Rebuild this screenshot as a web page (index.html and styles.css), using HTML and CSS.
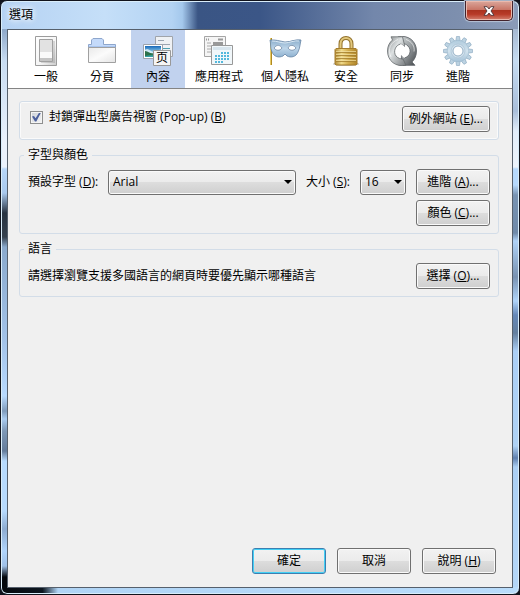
FILE: index.html
```html
<!DOCTYPE html>
<html lang="zh-Hant">
<head>
<meta charset="utf-8">
<title>選項</title>
<link rel="stylesheet" href="styles.css">
</head>
<body>
<div class="window">
  <header class="titlebar">
    <h1 class="title">選項</h1>
    <button class="close" type="button" aria-label="關閉">
      <svg width="12" height="10" viewBox="0 0 12 10"><path d="M1 .7h3.2L6 3l1.8-2.3H11L8 5l3 4.3H7.8L6 7 4.2 9.3H1L4 5z" fill="#fff" stroke="#4c3439" stroke-width=".9"/></svg>
    </button>
  </header>
  <main class="client">
    <nav class="tabs">
      <button class="tab" type="button">
        <svg class="icon" viewBox="0 0 30 30">
          <defs><linearGradient id="sw" x1="0" y1="0" x2="1" y2="1"><stop offset="0" stop-color="#fff"/><stop offset=".6" stop-color="#f4f4f4"/><stop offset="1" stop-color="#cacaca"/></linearGradient></defs>
          <path d="M4.500 .5h21v29h-21z" fill="url(#sw)" stroke="#9c9c9c"/>
          <path d="M10 5h14v22H10z" fill="#000" opacity=".13"/>
          <path d="M8.500 3.500h13v22h-13z" fill="#e2e2e2" stroke="#a0a0a0"/>
          <path d="M9 16h12v6H9z" fill="#fafafa"/><path d="M9 22h12v3H9z" fill="#c5c5c5"/>
        </svg>
        <span>一般</span>
      </button>
      <button class="tab" type="button">
        <svg class="icon" viewBox="0 0 30 30">
          <defs><linearGradient id="fo" x1="0" y1="0" x2="1" y2="1"><stop offset="0" stop-color="#e9e9e9"/><stop offset=".5" stop-color="#fbfbfb"/><stop offset="1" stop-color="#e4e4e4"/></linearGradient></defs>
          <path d="M1.500 12V8.500h3V4l1.500-1.500h9L16.500 4v4.500h12V12z" fill="#c4dafa" stroke="#8ea6cc"/>
          <path d="M1.500 11.500h27v15h-27z" fill="url(#fo)" stroke="#a0a0a0"/>
          <path d="M2 10.500h26" stroke="#a9c5ef"/>
        </svg>
        <span>分頁</span>
      </button>
      <button class="tab selected" type="button" aria-current="page">
        <svg class="icon" viewBox="0 0 30 30">
          <defs><linearGradient id="sky" x1="0" y1="0" x2="0" y2="1"><stop offset="0" stop-color="#1768b9"/><stop offset=".6" stop-color="#9bd7ee"/><stop offset=".7" stop-color="#327b52"/><stop offset="1" stop-color="#34a6b5"/></linearGradient></defs>
          <path d="M12.500 .5h17v20h-17z" fill="#eff1f4" stroke="#a0a4aa"/>
          <path d="M15 4.500h6M18 8.500h9" stroke="#9ba4b0"/><path d="M15 12.500h12" stroke="#4d9faf"/>
          <path d="M.5 8.500h19v14H.5z" fill="#fff" stroke="#9da3ac"/>
          <path d="M2 10h16v11H2z" fill="url(#sky)"/>
          <path d="M2 14c3-3 5 1 8 2s5-3 8-2v3c-5 1-10 1-16-1z" fill="#e8f6fa" opacity=".75"/>
          <path d="M2 15c3 0 5 3 10 3l-10 2z" fill="#2c714a"/>
          <path d="M10.500 14.500h17v15h-17z" fill="#f5f5f5" stroke="#999"/>
          <text class="glyph" x="13" y="26">页</text>
        </svg>
        <span>內容</span>
      </button>
      <button class="tab" type="button">
        <svg class="icon" viewBox="0 0 30 30">
          <path d="M.5 .5h21v20H.5z" fill="#f5f5f5" stroke="#a5a5a5"/>
          <path d="M2 3.500h1m1 0h1m9 0h5" stroke="#9a9a9a" stroke-width="2"/>
          <path d="M3 7h4M3 10h4M3 13h4M3 16h4" stroke="#aaa"/><path d="M9 6h10v4H9z" fill="#999"/>
          <path d="M7.500 9.500h21v19h-21z" fill="#f1f7fa" stroke="#989898"/>
          <path d="M9 11h18v3H9z" fill="#d8e5ed"/>
          <path d="M17 17h9M11 20h15M11 23h15M11 26h9" stroke="#53b8dc" stroke-width="2" stroke-dasharray="2 1"/>
        </svg>
        <span>應用程式</span>
      </button>
      <button class="tab" type="button">
        <svg class="icon wide" viewBox="0 0 34 30">
          <defs><linearGradient id="ma" x1="0" y1="0" x2="0" y2="1"><stop offset="0" stop-color="#8aacca"/><stop offset=".5" stop-color="#bdd5e9"/><stop offset="1" stop-color="#8fb2d0"/></linearGradient></defs>
          <path d="M3 2v27" stroke="#b08a22" stroke-width="2"/><path d="M2.500 2v27" stroke="#e8cb66"/>
          <path d="M2 4c5-.5 10 1 15 2 6 0 10-3 16-2-1 4-1 8-3 12-2 5-7 6-11 4l-2-2-2 2c-4 2-9 1-11-4C2 12 3 8 2 4z" fill="url(#ma)" stroke="#6684a5" stroke-width=".8"/>
          <path d="M6 12c3-4 6-3 8 0-2 3-6 3-8 0zm14 0c2-4 6-3 8 0-2 3-6 3-8 0z" fill="#fff" stroke="#7189a5" stroke-width=".8"/>
          <path d="M4 5c5 0 9 2 13 2s10-3 14-2" fill="none" stroke="#d9e8f4"/>
        </svg>
        <span>個人隱私</span>
      </button>
      <button class="tab" type="button">
        <svg class="icon" viewBox="0 0 30 30">
          <defs><linearGradient id="lo" x1="0" y1="0" x2="1" y2="0"><stop offset="0" stop-color="#b18b36"/><stop offset=".3" stop-color="#f0da8b"/><stop offset=".6" stop-color="#d3ad4d"/><stop offset="1" stop-color="#af8429"/></linearGradient></defs>
          <ellipse cx="15" cy="28" rx="13" ry="2" fill="#777" opacity=".45"/>
          <path d="M9.500 13V8c0-8 11-8 11 0v5" fill="none" stroke="#92712a" stroke-width="4"/>
          <path d="M9.500 13V8c0-8 11-8 11 0v5" fill="none" stroke="#e2c87d" stroke-width="2"/>
          <path d="M5 12.500h20l1 1V28l-1 1H5l-1-1V13.500z" fill="url(#lo)" stroke="#a57d2b"/>
          <path d="M5 16.500h20M5 19.500h20M5 22.500h20M5 25.500h20" stroke="#a47f2e" opacity=".8"/>
          <path d="M5 15.500h20M5 18.500h20M5 21.500h20M5 24.500h20" stroke="#f4e2a3" opacity=".7"/>
        </svg>
        <span>安全</span>
      </button>
      <button class="tab" type="button">
        <svg class="icon" viewBox="0 0 30 30">
          <defs><linearGradient id="s1" x1="0" y1="0" x2="1" y2="1"><stop offset="0" stop-color="#85898b"/><stop offset=".4" stop-color="#dde1e2"/><stop offset="1" stop-color="#777b7e"/></linearGradient><linearGradient id="s2" x1="0" y1="0" x2="1" y2="1"><stop offset="0" stop-color="#d8dddd"/><stop offset=".5" stop-color="#989da0"/><stop offset="1" stop-color="#43474a"/></linearGradient></defs>
          <path d="M11 .8C21-1.500 29.500 5 29.500 15c0 5-2 8.500-4.500 11l3 3.300H15.500L14 19l3 3c6-1 8-8 4-12-2-2-4-2.500-6-2.500z" fill="url(#s2)" stroke="#5b6064" stroke-width=".8"/>
          <path d="M19 29.200C9 31.500.5 25 .5 15 .5 10 2.500 6.500 5.500 4L4 .8h11.500L18 11l-4-3c-6 1-8 8-5 12 2 2.500 5 3 7 3z" fill="url(#s1)" stroke="#65696c" stroke-width=".8"/>
          <path d="M4 21C0 13 4 6 11 3.500M19 3.500c6 2 9 7 8 12" fill="none" stroke="#fff" opacity=".6"/>
          <path d="m10 11 4-3 4 3 .5-2.500 3 4.500v5l-4.500 4-3-3-.5 3-3.500-4z" fill="#fff"/>
        </svg>
        <span>同步</span>
      </button>
      <button class="tab" type="button">
        <svg class="icon" viewBox="0 0 30 30">
          <defs><linearGradient id="ge" x1="0" y1="0" x2="0" y2="1"><stop offset="0" stop-color="#b0cbdd"/><stop offset=".5" stop-color="#d2e3ee"/><stop offset="1" stop-color="#a6c3d8"/></linearGradient></defs>
          <g fill="#bdd3e2" stroke="#86a5bd" stroke-width=".6">
            <path id="tooth" d="M12.800 5 13.500.5h3l.7 4.500z"/>
            <use href="#tooth" transform="rotate(30 15 15)"/><use href="#tooth" transform="rotate(60 15 15)"/><use href="#tooth" transform="rotate(90 15 15)"/><use href="#tooth" transform="rotate(120 15 15)"/><use href="#tooth" transform="rotate(150 15 15)"/><use href="#tooth" transform="rotate(180 15 15)"/><use href="#tooth" transform="rotate(210 15 15)"/><use href="#tooth" transform="rotate(240 15 15)"/><use href="#tooth" transform="rotate(270 15 15)"/><use href="#tooth" transform="rotate(300 15 15)"/><use href="#tooth" transform="rotate(330 15 15)"/>
          </g>
          <circle cx="15" cy="15" r="10.800" fill="url(#ge)" stroke="#9db9cd" stroke-width=".5"/>
          <circle cx="15" cy="15" r="7" fill="#d3e2ed" stroke="#abc3d5" stroke-width=".8"/>
          <circle cx="15" cy="15" r="5" fill="#fff" stroke="#8ba8c0" stroke-width=".9"/>
        </svg>
        <span>進階</span>
      </button>
    </nav>

    <form class="panel">
      <section class="group row">
        <label class="check"><input type="checkbox" checked><span>封鎖彈出型廣告視窗 (Pop-up) (<u>B</u>)</span></label>
        <button class="button wide-button" type="button">例外網站 (<u>E</u>)...</button>
      </section>

      <fieldset class="group">
        <legend>字型與顏色</legend>
        <div class="fonts">
          <label for="font">預設字型 (<u>D</u>):</label>
          <span class="picker"><select id="font"><option>Arial</option></select></span>
          <label for="size">大小 (<u>S</u>):</label>
          <span class="picker"><select id="size"><option>16</option></select></span>
          <button class="button" type="button">進階 (<u>A</u>)...</button>
          <button class="button colors" type="button">顏色 (<u>C</u>)...</button>
        </div>
      </fieldset>

      <fieldset class="group">
        <legend>語言</legend>
        <div class="row language">
          <span>請選擇瀏覽支援多國語言的網頁時要優先顯示哪種語言</span>
          <button class="button" type="button">選擇 (<u>O</u>)...</button>
        </div>
      </fieldset>

      <footer class="actions">
        <button class="button default" type="button">確定</button>
        <button class="button" type="button">取消</button>
        <button class="button" type="button">說明 (<u>H</u>)</button>
      </footer>
    </form>
  </main>
</div>
</body>
</html>
```
FILE: styles.css
```css
* {
  box-sizing: border-box;
}

body {
  margin: 0;
  background: #11131c;
  color: #000;
  font: 12px/18px "Open Sans", "Noto Sans CJK TC", sans-serif;
}

button,
select {
  font: inherit;
  color: inherit;
}

.window {
  display: flex;
  flex-direction: column;
  min-height: 100vh;
  padding: 0 6px 6px;
  border: 1px solid #11131c;
  border-radius: 7px;
  box-shadow: inset 0 0 0 1px #d9edfa;
  background:
    linear-gradient(90deg, #b5d2f3, #c5dff8 20%, #b3d3f3 33%, #a4c8ec 35%, #3a5584 38%, #3b5687 50%, #7387ab 72%, #7d8fae 88%, #8b9cb9) top / 100% 28px no-repeat,
    linear-gradient(90deg, #06090e, #0d1620 8%, #b0d4f5 11%, #b9dcfb) bottom / 100% 7px no-repeat,
    linear-gradient(#8ea8c9 28px, #c8dcf2 60px, #eaf1fb 140px, #eaf1fb 166px, #b7d6f8 168px, #a9c9ed 192px, #283341 212px, #36414e 236px, #8aa9cc 246px, #a3c3e9 340px, #b8daff 395px, #7f9bbb 410px, #aaccf0 418px, #7e98b6 430px, #647c9b 450px, #b7dafd 460px, #b7dafd 510px, #8eacd1 528px, #b0d4fb 550px, #9fc0e7 565px, #05080d 576px) left / 8px 100% no-repeat,
    linear-gradient(#a5b8d1 28px, #c6dcf2 60px, #a9bed9 110px, #e2edf9 130px, #edf4fc 166px, #b6d9fd 168px, #b6d9fd 184px, #7893b2 194px, #6f89a8 232px, #afd2f7 240px, #7992b1 276px, #b0d4f9 300px, #6688b8 314px, #647f9e 332px, #abcff6 350px, #afd2f5 445px, #6080af 457px, #abcff4 466px, #b5d7f8) right / 8px 100% no-repeat,
    #b5d7f8;
}

.titlebar {
  display: flex;
  justify-content: space-between;
  align-items: flex-start;
  height: 28px;
}

.title {
  margin: 5px 2px;
  font-size: 12px;
  font-weight: 400;
  line-height: 18px;
  text-shadow: 0 0 6px #fff, 0 0 6px #fff;
}

.close {
  display: grid;
  place-items: center;
  width: 48px;
  height: 20px;
  padding: 0;
  border: 1px solid #43232c;
  border-top: 0;
  border-radius: 0 0 5px 5px;
  background: linear-gradient(#dba79c, #c97667 45%, #ab3320 50%, #b83b28 70%, #d48170);
  box-shadow: inset 0 0 0 1px #eab9ad, 0 0 1px 1px #b7c3d5;
}

.client {
  display: flex;
  flex: 1;
  flex-direction: column;
  border: 1px solid #56606c;
  background: #f0f0f0;
}

.tabs {
  display: flex;
  gap: 2px;
  padding-left: 11px;
  border-bottom: 1px solid #848484;
  background: #fff;
}

.tab {
  display: flex;
  flex-direction: column;
  align-items: center;
  gap: 2px;
  min-width: 54px;
  padding: 6px 8px 2px;
  border: 0;
  background: none;
}

.selected {
  background: #c1d2ee;
}

.icon {
  width: 30px;
  height: 30px;
}

.wide {
  width: 34px;
}

.glyph {
  font: 12px "Noto Sans CJK SC", sans-serif;
}

.panel {
  display: flex;
  flex: 1;
  flex-direction: column;
  gap: 6px;
  padding: 12px 13px 12px 11px;
}

.group {
  min-width: 0;
  margin: 0;
  padding: 5px 8px 7px;
  border: 1px solid #d3dde8;
  border-radius: 3px;
  box-shadow: inset 0 0 0 1px #fafafa;
}

fieldset.group {
  box-shadow: none;
}

legend {
  margin-left: -4px;
  padding: 0 4px;
}

.row {
  display: flex;
  align-items: flex-start;
  justify-content: space-between;
}

.row.group {
  padding-top: 4px;
}

.language {
  align-items: center;
}

.check {
  display: flex;
  align-items: center;
  gap: 6px;
  height: 22px;
  padding-left: 2px;
}

.check input {
  display: grid;
  place-items: center;
  width: 13px;
  height: 13px;
  margin: 0;
  appearance: none;
  border: 1px solid #8e8f8f;
  background: linear-gradient(135deg, #cbd0d6, #f6f6f6);
  box-shadow: inset 0 0 0 1px #f4f4f4;
}

.check input:checked::before {
  content: "";
  width: 9px;
  height: 9px;
  background: #4b5f9c;
  clip-path: polygon(0 45%, 22% 40%, 40% 65%, 80% 0, 100% 0, 48% 100%, 33% 100%);
}

.button {
  min-width: 74px;
  height: 26px;
  padding: 0 6px;
  border: 1px solid #707070;
  border-radius: 3px;
  background: linear-gradient(#f2f2f2, #ebebeb 49%, #dddddd 50%, #cfcfcf);
  box-shadow: inset 0 0 0 1px #fafafa;
}

.wide-button {
  min-width: 88px;
}

.default {
  border-color: #3c7fb1;
  box-shadow: inset 0 0 0 1px #43d0f5;
}

.fonts {
  display: grid;
  grid-template-columns: 70px 1fr 44px 46px auto;
  gap: 5px 10px;
  align-items: center;
  white-space: nowrap;
}

.colors {
  grid-column: 5;
}

.picker {
  position: relative;
}

.picker::after {
  content: "";
  position: absolute;
  top: 10px;
  right: 4px;
  border: 4px solid transparent;
  border-top-color: #000;
  border-bottom: 0;
  pointer-events: none;
}

.picker select {
  display: block;
  width: 100%;
  height: 25px;
  padding: 0 4px;
  appearance: none;
  border: 1px solid #707070;
  border-radius: 3px;
  background: linear-gradient(#f2f2f2, #ebebeb 49%, #dddddd 50%, #cfcfcf);
  box-shadow: inset 0 0 0 1px #fafafa;
}

.actions {
  display: flex;
  justify-content: flex-end;
  gap: 11px;
  margin-top: auto;
  padding: 0 3px 1px 0;
}
```
